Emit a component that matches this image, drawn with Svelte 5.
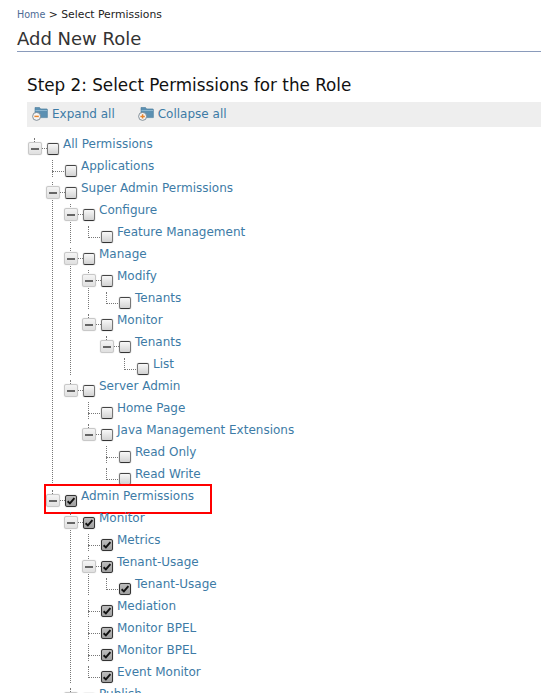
<script>
  const tree = [
    { t: 'All Permissions', root: true, c: [
      { t: 'Applications' },
      { t: 'Super Admin Permissions', c: [
        { t: 'Configure', c: [{ t: 'Feature Management' }] },
        { t: 'Manage', c: [
          { t: 'Modify', c: [{ t: 'Tenants' }] },
          { t: 'Monitor', c: [{ t: 'Tenants', c: [{ t: 'List' }] }] }
        ] },
        { t: 'Server Admin', c: [
          { t: 'Home Page' },
          { t: 'Java Management Extensions', c: [{ t: 'Read Only' }, { t: 'Read Write' }] }
        ] }
      ] },
      { t: 'Admin Permissions', on: true, mark: true, c: [
        { t: 'Monitor', on: true, c: [
          { t: 'Metrics', on: true },
          { t: 'Tenant-Usage', on: true, c: [{ t: 'Tenant-Usage', on: true }] },
          { t: 'Mediation', on: true },
          { t: 'Monitor BPEL', on: true },
          { t: 'Monitor BPEL', on: true },
          { t: 'Event Monitor', on: true }
        ] },
        { t: 'Publish', c: [] }
      ] }
    ] }
  ];
</script>

{#snippet node(n)}
  <li class:root={n.root}>
    <div class="row" class:mark={n.mark}>
      {#if n.c}
        <span class="toggle"><i></i></span>
      {:else}
        <span class="spacer"></span>
      {/if}
      <span class="check" class:on={n.on}>
        {#if n.on}
          <svg viewBox="0 0 12 12" width="12" height="12"><path d="M2.6 6.2 L4.9 8.4 L9.4 3.2" fill="none" stroke="#111" stroke-width="1.9"/></svg>
        {/if}
      </span>
      <a class="label" href="#top">{n.t}</a>
    </div>
    {#if n.c && n.c.length}
      <ul>
        {#each n.c as k}{@render node(k)}{/each}
      </ul>
    {/if}
  </li>
{/snippet}

<div class="page">
  <nav class="crumb"><a href="#top">Home</a> &gt; Select Permissions</nav>
  <h1>Add New Role</h1>
  <div class="content">
    <h2>Step 2: Select Permissions for the Role</h2>
    <div class="bar">
      <a href="#top" class="act">
        <svg viewBox="0 0 16 16" width="16" height="16">
          <path d="M3 1.5 h4.5 l1.2 1.4 h6 a.7 .7 0 0 1 .7 .7 v8 h-12.4 z" fill="#5c90b2" stroke="#4a7c9c" stroke-width=".6"/>
          <path d="M3.4 4.5 h11.6" stroke="#8db6cf" stroke-width="1"/>
          <circle cx="4.6" cy="10.4" r="4" fill="#f6f6f6" stroke="#77858f" stroke-width=".9"/>
          <path d="M2.4 10.4 h4.4" stroke="#e8842c" stroke-width="1.5"/>
        </svg>
        Expand all
      </a>
      <a href="#top" class="act">
        <svg viewBox="0 0 16 16" width="16" height="16">
          <path d="M3 1.5 h4.5 l1.2 1.4 h6 a.7 .7 0 0 1 .7 .7 v8 h-12.4 z" fill="#5c90b2" stroke="#4a7c9c" stroke-width=".6"/>
          <path d="M3.4 4.5 h11.6" stroke="#8db6cf" stroke-width="1"/>
          <circle cx="4.6" cy="10.4" r="4" fill="#f6f6f6" stroke="#77858f" stroke-width=".9"/>
          <path d="M2.4 10.4 h4.4 M4.6 8.2 v4.4" stroke="#e8842c" stroke-width="1.5"/>
        </svg>
        Collapse all
      </a>
    </div>
    <ul class="tree">
      {#each tree as n}{@render node(n)}{/each}
    </ul>
  </div>
</div>

<style>
  :global(html), :global(body) { margin: 0; height: 100%; overflow: hidden; background: #fff; }
  .page { font-family: "DejaVu Sans", sans-serif; padding: 8px 0 0 17px; }
  a { text-decoration: none; }
  .crumb { font-size: 10.8px; line-height: 14px; color: #222; }
  .crumb a { color: #4d6a94; font-size: 9.6px; }
  h1 { margin: 5px 0 0; padding: 0; font-size: 18px; line-height: 24px; font-weight: 400; color: #333; border-bottom: 1px solid #8a9bbb; }
  .content { padding: 22px 0 0 10px; }
  h2 { margin: 0; font-size: 16.8px; line-height: 22px; font-weight: 400; color: #111; }
  .bar { box-sizing: border-box; margin-top: 6px; height: 25px; background: #eee; display: flex; align-items: center; padding: 0 0 2px 5px; gap: 23px; }
  .act { display: flex; align-items: center; gap: 4px; font-size: 12px; color: #3d7ba6; }
  ul { list-style: none; margin: 0; padding: 0; }
  .tree { margin-top: 6px; padding-left: 1px; }
  li ul { padding-left: 18px; }
  li { position: relative; }
  li::before { content: ""; position: absolute; left: 6px; top: 5px; bottom: 0; border-left: 1px dotted #777; }
  li:last-child::before { bottom: auto; height: 12px; }
  li.root::before { top: 5px; height: 6px; }
  .row { position: relative; display: flex; align-items: flex-start; height: 22px; }
  .toggle { position: relative; z-index: 1; box-sizing: border-box; width: 14px; height: 13px; margin-top: 9px; background: linear-gradient(#f4f4f4, #e0e0e0); border: 1px solid #c8c8c8; border-radius: 2px; box-shadow: 0 0 1px rgba(0,0,0,.25); display: flex; align-items: center; justify-content: center; }
  .toggle i { display: block; width: 8px; height: 2px; background: #666; }
  .spacer { width: 14px; flex: none; position: relative; }
  .spacer::after { content: ""; position: absolute; left: 6px; right: -4px; top: 16px; border-top: 1px dotted #777; }
  .toggle::after { content: ""; position: absolute; left: 13px; width: 5px; top: 5px; border-top: 1px dotted #777; }
  .check { box-sizing: border-box; flex: none; width: 12px; height: 12px; margin: 10px 0 0 5px; border: 1px solid #777; border-top-color: #444; border-bottom-color: #333; border-radius: 2px; background: linear-gradient(#f8f8f8, #d2d2d2); box-shadow: 0 0 1px rgba(0,0,0,.55); position: relative; }
  .check.on { background: linear-gradient(#bcbcbc, #a0a0a0); border-color: #333; }
  .check svg { position: absolute; left: -1px; top: -1px; }
  .label { margin-left: 4px; font-size: 12px; line-height: 22px; color: #3d7ba6; white-space: nowrap; }
  .mark::after { content: ""; position: absolute; left: -2px; top: -1px; width: 164px; height: 26px; border: 2px solid #f00; }
</style>
